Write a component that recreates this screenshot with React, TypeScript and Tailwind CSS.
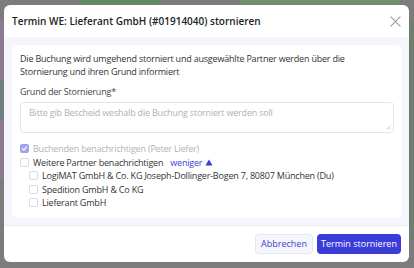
import React from "react";

function Check({ checked, disabled }: { checked?: boolean; disabled?: boolean }) {
  if (checked) {
    return (
      <span className={`flex h-[9px] w-[9px] shrink-0 items-center justify-center rounded-[2px] ${disabled ? "bg-[#a3a3ec]" : "bg-[#3d3dd9]"}`}>
        <svg width="7" height="7" viewBox="0 0 10 10" fill="none">
          <path d="M2 5.2 L4.2 7.3 L8 2.8" stroke="white" strokeWidth="1.6" strokeLinecap="round" strokeLinejoin="round" />
        </svg>
      </span>
    );
  }
  return <span className="h-[9px] w-[9px] shrink-0 rounded-[2px] border border-[#d9d9df] bg-white" />;
}

export default function App() {
  return (
    <div
      className="relative h-[268px] w-[414px] overflow-hidden bg-[#7c7c7c]"
      style={{ fontFamily: '"Open Sans", "Noto Sans", sans-serif' }}
    >
      {/* background hints */}
      <div className="absolute left-[80px] top-0 h-[4px] w-[80px] bg-[#5e8a5e]" />
      <div className="absolute left-[240px] top-0 h-[5px] w-[160px] bg-[#6f8f6f]" />
      <div className="absolute left-0 top-[20px] h-[60px] w-[4px] bg-[#8a7a92]" />
      <div className="absolute left-0 top-[80px] h-[40px] w-[4px] bg-[#6f7f7f]" />
      <div className="absolute left-0 top-[120px] h-[60px] w-[4px] bg-[#8a7a92]" />
      <div className="absolute right-0 top-[20px] h-[220px] w-[5px] bg-[#6f7f6f]" />

      <div className="absolute left-[4px] top-[5px] flex h-[257px] w-[405px] flex-col overflow-hidden rounded-[6px] bg-white text-[#2f2f33]">
        {/* header */}
        <div className="flex h-[32px] shrink-0 items-center justify-between pl-[8px] pr-[7px]">
          <div className="whitespace-nowrap text-[10px] font-semibold text-[#222]">
            Termin WE: Lieferant GmbH (#01914040) stornieren
          </div>
          <svg width="11" height="11" viewBox="0 0 12 12" className="mr-[1px]">
            <path d="M1 1 L11 11 M11 1 L1 11" stroke="#9a9aa0" strokeWidth="1.2" strokeLinecap="round" />
          </svg>
        </div>

        {/* body */}
        <div className="min-h-0 flex-1 bg-[#f5f5fc] pb-[7px] pl-[8px] pr-[7px] pt-[8px]">
          <div className="h-full rounded-[6px] bg-white px-[8px] pt-[7px]">
            <p className="whitespace-nowrap text-[9px] leading-[13px] tracking-[-0.2px] text-[#333]">
              Die Buchung wird umgehend storniert und ausgewählte Partner werden über die
              <br />
              Stornierung und ihren Grund informiert
            </p>
            <div className="mt-[7px] text-[9px] leading-[13px] tracking-[-0.2px] text-[#444]">Grund der Stornierung*</div>
            <div className="relative mt-[4px] h-[31px] w-[374px] rounded-[4px] border border-[#e6e6ea] px-[8px] pt-[3px] text-[9px] leading-[13px] tracking-[-0.2px] text-[#b0b0b6]">
              Bitte gib Bescheid weshalb die Buchung storniert werden soll
              <svg width="5" height="5" viewBox="0 0 6 6" className="absolute bottom-[2px] right-[2px]">
                <path d="M1 5 L5 1 M3.5 5 L5 3.5" stroke="#aaa" strokeWidth="0.8" />
              </svg>
            </div>

            <div className="mt-[9px] flex flex-col whitespace-nowrap text-[9px] leading-[13.5px] tracking-[-0.2px]">
              <div className="flex items-center gap-[4px]">
                <Check checked disabled />
                <span className="text-[#b3b3b8]">Buchenden benachrichtigen (Peter Liefer)</span>
              </div>
              <div className="flex items-center gap-[4px]">
                <Check />
                <span className="text-[#333]">Weitere Partner benachrichtigen</span>
                <span className="ml-[3px] flex items-center gap-[3px] text-[#3c3cdc]">
                  weniger
                  <svg width="8" height="7" viewBox="0 0 8 7">
                    <path d="M4 0.5 L7.6 6.5 L0.4 6.5 Z" fill="#3c3cdc" />
                  </svg>
                </span>
              </div>
              <div className="flex items-center gap-[4px] pl-[9px]">
                <Check />
                <span className="text-[#333]">LogiMAT GmbH &amp; Co. KG Joseph-Dollinger-Bogen 7, 80807 München (Du)</span>
              </div>
              <div className="flex items-center gap-[4px] pl-[9px]">
                <Check />
                <span className="text-[#333]">Spedition GmbH &amp; Co KG</span>
              </div>
              <div className="flex items-center gap-[4px] pl-[9px]">
                <Check />
                <span className="text-[#333]">Lieferant GmbH</span>
              </div>
            </div>
          </div>
        </div>

        {/* footer */}
        <div className="flex h-[37px] shrink-0 items-center justify-end gap-[4px] border-t border-[#ececf3] pr-[8px]">
          <button className="h-[20px] w-[58px] rounded-[4px] border border-[#e4e4f8] bg-[#f5f5fe] text-[9px] font-medium text-[#4444cc]">
            Abbrechen
          </button>
          <button className="h-[20px] w-[84px] rounded-[4px] bg-[#3b3bd8] text-[9px] font-medium text-white">
            Termin stornieren
          </button>
        </div>
      </div>
    </div>
  );
}
